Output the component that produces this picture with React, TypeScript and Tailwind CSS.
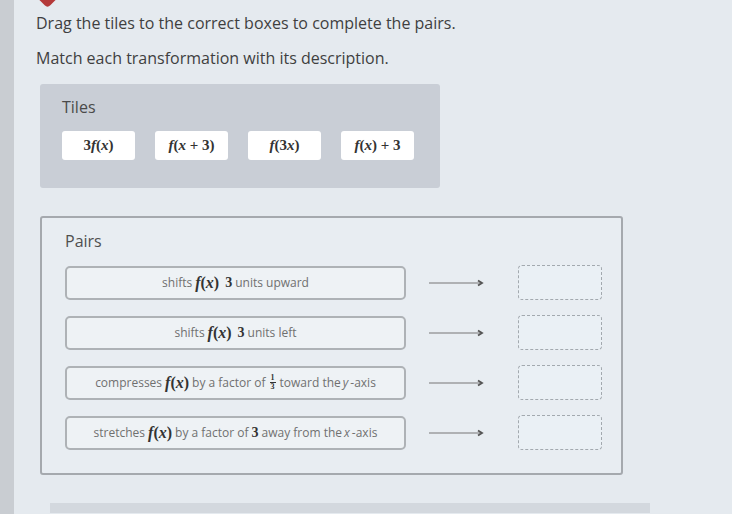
import type { ReactNode } from 'react'

// Drag-and-drop matching activity: tiles on top, pairs below.
const tiles: ReactNode[] = [
  <>3<i>f</i>(<i>x</i>)</>,
  <><i>f</i>(<i>x</i>&nbsp;+&nbsp;3)</>,
  <><i>f</i>(3<i>x</i>)</>,
  <><i>f</i>(<i>x</i>)&nbsp;+&nbsp;3</>,
]

function Fx() {
  return (
    <span className="font-['Liberation_Serif',serif] text-[16px] font-bold text-[#333] mx-[3px]">
      <i>f</i>(<i>x</i>)
    </span>
  )
}

function Num({ n }: { n: string }) {
  return <span className="font-['Liberation_Serif',serif] text-[14px] font-bold text-[#333] mx-[3px]">{n}</span>
}

function Third() {
  return (
    <span className="inline-flex flex-col items-center mx-[4px] font-['Liberation_Serif',serif] text-[8px] leading-[8px] font-bold text-[#333] align-middle">
      <span>1</span>
      <span className="border-t border-[#333] w-[6px] text-center">3</span>
    </span>
  )
}

const pairs: ReactNode[] = [
  <>shifts<Fx /><Num n="3" />units upward</>,
  <>shifts<Fx /><Num n="3" />units left</>,
  <>compresses<Fx />by a factor of<Third />toward the <i className="mx-[2px]">y</i>-axis</>,
  <>stretches<Fx />by a factor of<Num n="3" />away from the <i className="mx-[2px]">x</i>-axis</>,
]

function Arrow() {
  return (
    <svg width="56" height="10" viewBox="0 0 56 10" className="shrink-0">
      <line x1="0" y1="5" x2="52" y2="5" stroke="#777" strokeWidth="1.1" />
      <path d="M49 2.5 L53 5 L49 7.5" fill="none" stroke="#555" strokeWidth="1.8" />
    </svg>
  )
}

export default function App() {
  return (
    <div className="w-[732px] h-[514px] overflow-hidden bg-[#e5eaef] flex font-['Open_Sans',sans-serif]">
      <div className="w-[14px] shrink-0 bg-[#c9cdd2]" />
      <div className="flex-1 pl-[22px] relative">
        <span className="absolute left-[26px] -top-[10px] w-[15px] h-[15px] bg-[#b43a3a] rotate-45 rounded-sm" />

        <p className="pt-[12px] text-[16px] leading-[22px] text-[#3f3f3f]">
          Drag the tiles to the correct boxes to complete the pairs.
        </p>
        <p className="mt-[13px] text-[16px] leading-[22px] text-[#3f3f3f]">
          Match each transformation with its description.
        </p>

        <div className="mt-[15px] ml-[4px] w-[400px] h-[104px] bg-[#c9ced6] rounded-[3px] pl-[22px] pt-[12px]">
          <div className="text-[16px] leading-[22px] text-[#4a4a4a]">Tiles</div>
          <div className="mt-[13px] flex gap-[20px]">
            {tiles.map((t, i) => (
              <div
                key={i}
                className="w-[73px] h-[29px] bg-white rounded-[3px] flex items-center justify-center font-['Liberation_Serif',serif] text-[15px] font-bold text-[#333]"
              >
                {t}
              </div>
            ))}
          </div>
        </div>

        <div className="mt-[28px] ml-[4px] w-[583px] h-[259px] border-2 border-[#a5a9ae] rounded-[3px] bg-[#e8edf2] pl-[23px] pt-[12px]">
          <div className="text-[16px] leading-[22px] text-[#4f4f4f]">Pairs</div>
          <div className="mt-[13px] flex flex-col gap-[15px]">
            {pairs.map((p, i) => (
              <div key={i} className="flex items-center">
                <div className="w-[341px] h-[34px] border-2 border-[#aeb2b6] rounded-[5px] bg-[#eef2f5] flex items-center justify-center text-[12px] text-[#707070] whitespace-nowrap">
                  {p}
                </div>
                <div className="ml-[23px]">
                  <Arrow />
                </div>
                <div className="ml-[33px] w-[84px] h-[35px] border-[1.5px] border-dashed border-[#a3a9af] rounded-[4px] bg-[#eaf0f5]" />
              </div>
            ))}
          </div>
        </div>

        <div className="mt-[28px] ml-[14px] w-[600px] h-[10px] bg-[#d3d8de]" />
      </div>
    </div>
  )
}
